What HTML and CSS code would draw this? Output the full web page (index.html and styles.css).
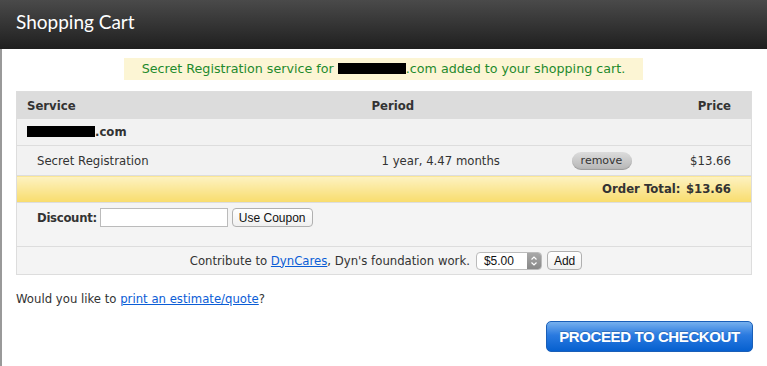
FILE: index.html
```html
<!DOCTYPE html>
<html lang="en">
<head>
    <meta charset="UTF-8">
    <title>Shopping Cart</title>
    <link rel="stylesheet" href="styles.css">
</head>
<body>

    <div class="title-bar">
        <h1>Shopping Cart</h1>
    </div>

    <div class="content">
        <div class="notice">Secret Registration service for <span class="redact redact-notice"></span>.com added to your shopping cart.</div>

        <table class="cart">
            <colgroup>
                <col class="col-service">
                <col class="col-period">
                <col class="col-action">
                <col class="col-price">
            </colgroup>
            <thead>
                <tr>
                    <th class="service">Service</th>
                    <th class="period">Period</th>
                    <th></th>
                    <th class="price">Price</th>
                </tr>
            </thead>
            <tbody>
                <tr class="domain-row">
                    <td colspan="4"><span class="redact redact-domain"></span>.com</td>
                </tr>
                <tr class="item-row">
                    <td class="item-name">Secret Registration</td>
                    <td class="item-period">1 year, 4.47 months</td>
                    <td class="item-action"><button class="remove-btn">remove</button></td>
                    <td class="price">$13.66</td>
                </tr>
                <tr class="total-row">
                    <td colspan="3" class="total-label">Order Total:</td>
                    <td class="price">$13.66</td>
                </tr>
                <tr class="discount-row">
                    <td colspan="4">
                        <div class="discount">
                            <label for="coupon">Discount:</label>
                            <input type="text" id="coupon" class="coupon-input">
                            <button class="mac-btn">Use Coupon</button>
                        </div>
                    </td>
                </tr>
                <tr class="contribute-row">
                    <td colspan="4">
                        <div class="contribute">
                            <span>Contribute to <a href="#">DynCares</a>, Dyn's foundation work.</span>
                            <span class="select-box">
                                <span class="select-value">$5.00</span>
                                <span class="select-arrows">
                                    <svg width="8" height="12" viewBox="0 0 8 12"><path d="M1.5 4.5 L4 2 L6.5 4.5 M1.5 7.5 L4 10 L6.5 7.5" fill="none" stroke="#fff" stroke-width="1.2"/></svg>
                                </span>
                            </span>
                            <button class="mac-btn">Add</button>
                        </div>
                    </td>
                </tr>
            </tbody>
        </table>

        <p class="estimate">Would you like to <a href="#">print an estimate/quote</a>?</p>

        <div class="checkout">
            <button class="checkout-btn">PROCEED TO CHECKOUT</button>
        </div>
    </div>

</body>
</html>
```

FILE: styles.css
```css
body {
    margin: 0;
    font-family: "DejaVu Sans", sans-serif;
    font-size: 11.7px;
    color: #333;
    background-color: #fff;
}
.title-bar {
    height: 49px;
    background: linear-gradient(#4a4a4a, #1f1f1f);
    box-sizing: border-box;
}
.title-bar h1 {
    margin: 0;
    padding: 10px 0 0 16px;
    font-family: "Lato", sans-serif;
    font-size: 19px;
    font-weight: 400;
    color: #fff;
}
.content {
    border-left: 2px solid #999;
    padding: 9px 15px 20px 14px;
    min-height: 300px;
}
.notice {
    width: 519px;
    height: 22px;
    line-height: 22px;
    margin: 0 auto 0 108px;
    background-color: #fcf5d4;
    color: #1f8a2c;
    text-align: center;
    font-size: 12.7px;
}
.redact {
    display: inline-block;
    background-color: #000;
    vertical-align: -1px;
}
.redact-notice {
    width: 68px;
    height: 11px;
}
.redact-domain {
    width: 68px;
    height: 11px;
}
.cart {
    margin-top: 11px;
    width: 735px;
    border-collapse: collapse;
    table-layout: fixed;
    border: 1px solid #ddd;
}
.col-service { width: 345px; }
.col-period { width: 200px; }
.col-action { width: 123px; }
.col-price { width: 67px; }
.cart th {
    height: 27px;
    padding: 0;
    background-color: #dcdcdc;
    font-weight: bold;
    text-align: left;
}
.cart th.service {
    padding-left: 10px;
}
.cart th.period {
    padding-left: 10px;
}
.cart .price {
    text-align: right;
    padding-right: 20px;
}
.cart td {
    padding: 0;
    background-color: #f2f2f2;
    border-bottom: 1px solid #ddd;
}
.domain-row td {
    height: 26px;
    padding-left: 10px;
    font-weight: bold;
}
.item-row td {
    height: 29px;
}
.item-row .item-name {
    padding-left: 20px;
}
.item-row .item-period {
    padding-left: 20px;
}
.item-row .item-action {
    padding-left: 10px;
}
.remove-btn {
    width: 60px;
    height: 18px;
    padding: 0;
    border: none;
    border-radius: 9px;
    background: linear-gradient(#dcdcdc, #b5b5b5);
    box-shadow: inset 0 -1px 1px rgba(0, 0, 0, 0.15);
    font-family: "DejaVu Sans", sans-serif;
    font-size: 11px;
    color: #333;
}
.total-row td {
    height: 26px;
    background: linear-gradient(#fdf2c2, #f8dc6c);
    font-weight: bold;
}
.total-row .total-label {
    text-align: right;
    padding-right: 4px;
}
.total-row td.price {
    padding-right: 20px;
}
.discount-row td {
    height: 43px;
    vertical-align: top;
    background-color: #f4f4f4;
}
.discount {
    display: flex;
    align-items: center;
    gap: 4px;
    padding: 5px 0 0 20px;
}
.discount label {
    font-weight: bold;
    letter-spacing: -0.3px;
    margin-right: -1px;
}
.coupon-input {
    width: 128px;
    height: 19px;
    box-sizing: border-box;
    border: 1px solid #bbb;
    margin: 0;
    padding: 0 3px;
}
.mac-btn {
    height: 19px;
    padding: 0 6px;
    border: 1px solid #b0b0b0;
    border-radius: 4px;
    background: linear-gradient(#fff, #f0f0f0);
    font-family: "Liberation Sans", sans-serif;
    font-size: 12px;
    color: #111;
}
.contribute-row td {
    height: 27px;
    background-color: #f4f4f4;
}
.contribute {
    display: flex;
    align-items: center;
    justify-content: center;
    gap: 5px;
    padding-left: 4px;
}
.contribute a,
.estimate a {
    color: #0b5dd6;
}
.select-box {
    display: inline-flex;
    align-items: stretch;
    width: 66px;
    height: 18px;
    box-sizing: border-box;
    border: 1px solid #bbb;
    border-radius: 4px;
    background-color: #fff;
    overflow: hidden;
    margin-left: 1px;
}
.select-value {
    flex: 1;
    padding-left: 7px;
    line-height: 16px;
    font-family: "Liberation Sans", sans-serif;
    font-size: 12px;
    color: #111;
}
.select-arrows {
    width: 14px;
    display: flex;
    align-items: center;
    justify-content: center;
    background: linear-gradient(#a8a8a8, #888);
}
.estimate {
    margin: 17px 0 0 0;
}
.checkout {
    display: flex;
    justify-content: flex-end;
    margin-top: 15px;
}
.checkout-btn {
    width: 207px;
    height: 31px;
    margin-right: -1px;
    border: 1px solid #1a5fb8;
    border-radius: 5px;
    background: linear-gradient(#76b0ee, #2a7ae0 45%, #0660cf);
    color: #fff;
    font-family: "Liberation Sans", sans-serif;
    font-size: 15px;
    font-weight: bold;
    letter-spacing: -0.4px;
    text-shadow: 0 -1px 0 rgba(0, 0, 0, 0.2);
}
```
